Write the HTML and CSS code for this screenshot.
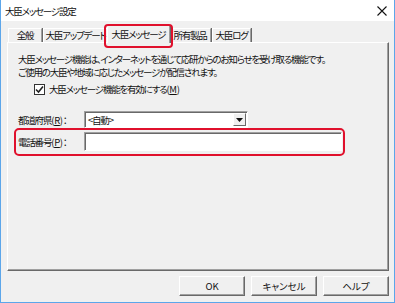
FILE: index.html
```html
<!DOCTYPE html>
<html lang="ja">
<head>
    <meta charset="UTF-8">
    <title>大臣メッセージ設定</title>
    <link rel="stylesheet" href="styles.css">
</head>
<body>
    <div class="dialog">
        <div class="titlebar">
            <span class="title">大臣メッセージ設定</span>
            <svg class="close" width="10" height="10" viewBox="0 0 10 10">
                <path d="M0.5 0.5 L9.5 9.5 M9.5 0.5 L0.5 9.5" stroke="#111" stroke-width="1.1" fill="none"/>
            </svg>
        </div>

        <div class="dialog-body">
            <div class="tabs">
                <div class="tab tab-general">全般</div>
                <div class="tab tab-update">大臣アップデート</div>
                <div class="tab tab-message active">大臣メッセージ</div>
                <div class="tab tab-products">所有製品</div>
                <div class="tab tab-log">大臣ログ</div>
            </div>

            <div class="panel">
                <p class="desc">大臣メッセージ機能は、インターネットを通じて応研からのお知らせを受け取る機能です。<br>ご使用の大臣や地域に応じたメッセージが配信されます。</p>

                <label class="check-row">
                    <span class="checkbox">
                        <svg width="9" height="9" viewBox="0 0 9 9">
                            <path d="M1 4.5 L3.5 7 L8 1.5" stroke="#222" stroke-width="1.6" fill="none"/>
                        </svg>
                    </span>
                    <span>大臣メッセージ機能を有効にする<span class="key">(<u>M</u>)</span></span>
                </label>

                <div class="form-row select-row">
                    <span class="form-label">都道府県<span class="key">(<u>R</u>)</span>：</span>
                    <div class="select">
                        <span class="select-value">&lt;自動&gt;</span>
                        <span class="select-btn">
                            <svg width="7" height="4" viewBox="0 0 7 4"><path d="M0 0 H7 L3.5 4 Z" fill="#111"/></svg>
                        </span>
                    </div>
                </div>

                <div class="form-row phone-row">
                    <span class="form-label">電話番号<span class="key">(<u>P</u>)</span>：</span>
                    <div class="text-input"></div>
                </div>
            </div>

            <div class="buttons">
                <button class="btn">OK</button>
                <button class="btn">キャンセル</button>
                <button class="btn">ヘルプ</button>
            </div>
        </div>
    </div>
</body>
</html>
```

FILE: styles.css
```css
body {
    margin: 0;
    font-family: "Noto Sans CJK JP", "Noto Sans", sans-serif;
    font-size: 9.5px;
    letter-spacing: -1.2px;
    font-feature-settings: "palt";
    color: #111;
    background: #f0f0f0;
}

.key {
    letter-spacing: -0.3px;
}

.dialog {
    width: 395px;
    height: 303px;
    box-sizing: border-box;
    border: 1px solid #5ca6ea;
    border-top: none;
    background: #f0f0f0;
    display: flex;
    flex-direction: column;
}

.titlebar {
    height: 21px;
    background: #fff;
    display: flex;
    align-items: center;
    justify-content: space-between;
    padding: 0 7px 0 4px;
}

.dialog-body {
    flex: 1;
    display: flex;
    flex-direction: column;
    padding: 4px 5px 0 6px;
}

/* タブ */
.tabs {
    display: flex;
    align-items: flex-end;
    height: 17px;
    padding-left: 1px;
    position: relative;
    z-index: 1;
}

.tab {
    flex-shrink: 0;
    height: 14px;
    line-height: 13px;
    text-align: center;
    box-sizing: border-box;
    border-top: 1px solid #fff;
    border-left: 1px solid #fff;
    border-right: 1px solid #a0a0a0;
    box-shadow: 1px 0 0 #696969;
    margin-right: 1px;
    white-space: nowrap;
}

.tab-general { width: 34px; }
.tab-update { width: 65px; }
.tab-message { width: 63px; }
.tab-products { width: 42px; }
.tab-log { width: 39px; }

.tab.active {
    height: 18px;
    line-height: 16px;
    margin: 0 -1px -1px -2px;
    background: #f0f0f0;
    position: relative;
}

/* 赤枠（注釈） */
.tab.active::after {
    content: "";
    position: absolute;
    left: -4px;
    right: -4px;
    top: -2px;
    bottom: -5px;
    border: 2px solid #e0102c;
    border-radius: 4px;
}

.panel {
    flex: 1;
    box-sizing: border-box;
    border: 1px solid;
    border-color: #fff #696969 #696969 #fff;
    box-shadow: inset -1px -1px 0 #a0a0a0;
    padding: 10px 10px 0 10px;
}

.desc {
    margin: 0;
    line-height: 13px;
    white-space: nowrap;
}

.check-row {
    display: flex;
    align-items: center;
    gap: 4px;
    margin: 4px 0 0 16px;
    height: 12px;
}

.checkbox {
    width: 11px;
    height: 11px;
    box-sizing: border-box;
    border: 1px solid #333;
    background: #fff;
    display: flex;
    align-items: center;
    justify-content: center;
}

.form-row {
    display: flex;
    align-items: center;
}

.form-label {
    width: 66px;
    flex-shrink: 0;
}

.select-row {
    margin-top: 16px;
}

.select {
    width: 164px;
    height: 17px;
    box-sizing: border-box;
    border: 1px solid;
    border-color: #a0a0a0 #fff #fff #a0a0a0;
    box-shadow: inset 1px 1px 0 #696969;
    background: #fff;
    display: flex;
    align-items: center;
    justify-content: space-between;
    padding-left: 3px;
}

.select-btn {
    width: 13px;
    height: 13px;
    box-sizing: border-box;
    margin-right: 1px;
    background: #f0f0f0;
    border: 1px solid;
    border-color: #fff #696969 #696969 #fff;
    display: flex;
    align-items: center;
    justify-content: center;
}

.phone-row {
    width: 331px;
    box-sizing: border-box;
    margin-left: -4px;
    padding: 2px 1px 3px 2px;
    border: 2px solid #e0102c;
    border-radius: 5px;
}

.text-input {
    width: 258px;
    height: 19px;
    box-sizing: border-box;
    border: 1px solid;
    border-color: #a0a0a0 #fff #fff #a0a0a0;
    box-shadow: inset 1px 1px 0 #696969;
    background: #fff;
}

/* ボタン */
.buttons {
    display: flex;
    justify-content: flex-end;
    gap: 6px;
    padding: 5px 0 6px;
}

.btn {
    width: 66px;
    height: 20px;
    font: inherit;
    color: #111;
    background: #f0f0f0;
    border: 1px solid;
    border-color: #fff #696969 #696969 #fff;
    box-shadow: inset -1px -1px 0 #a0a0a0;
    padding: 0;
}
```
